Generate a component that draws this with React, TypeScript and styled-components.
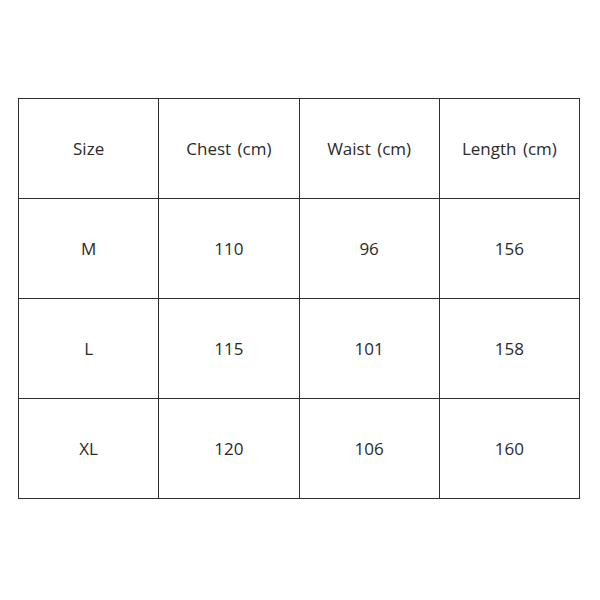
import styled, { createGlobalStyle } from 'styled-components';

const GlobalStyle = createGlobalStyle`
  body {
    margin: 0;
    background: #ffffff;
  }
`;

// page wrapper that places the chart on the white canvas
const Page = styled.div`
  padding: 98px 0 0 18px;
  width: 600px;
  height: 600px;
  box-sizing: border-box;
`;

const SizeTable = styled.table`
  border-collapse: collapse;
  width: 562px;
  table-layout: fixed;
  font-family: 'Open Sans', 'Noto Sans', sans-serif;
  font-size: 17px;
  word-spacing: 2px;
  color: #2a2a2a;
`;

const Cell = styled.td`
  height: 99px;
  border: 1.5px solid #2e2e2e;
  text-align: center;
  vertical-align: middle;
  padding: 0;
`;

const headers = ['Size', 'Chest (cm)', 'Waist (cm)', 'Length (cm)'];

const rows = [
  ['M', '110', '96', '156'],
  ['L', '115', '101', '158'],
  ['XL', '120', '106', '160'],
];

const App = () => {
  return (
    <Page>
      <GlobalStyle />
      <SizeTable>
        <tbody>
          <tr>
            {headers.map((h) => (
              <Cell key={h}>{h}</Cell>
            ))}
          </tr>
          {rows.map((row) => (
            <tr key={row[0]}>
              {row.map((v, i) => (
                <Cell key={i}>{v}</Cell>
              ))}
            </tr>
          ))}
        </tbody>
      </SizeTable>
    </Page>
  );
};

export default App;
